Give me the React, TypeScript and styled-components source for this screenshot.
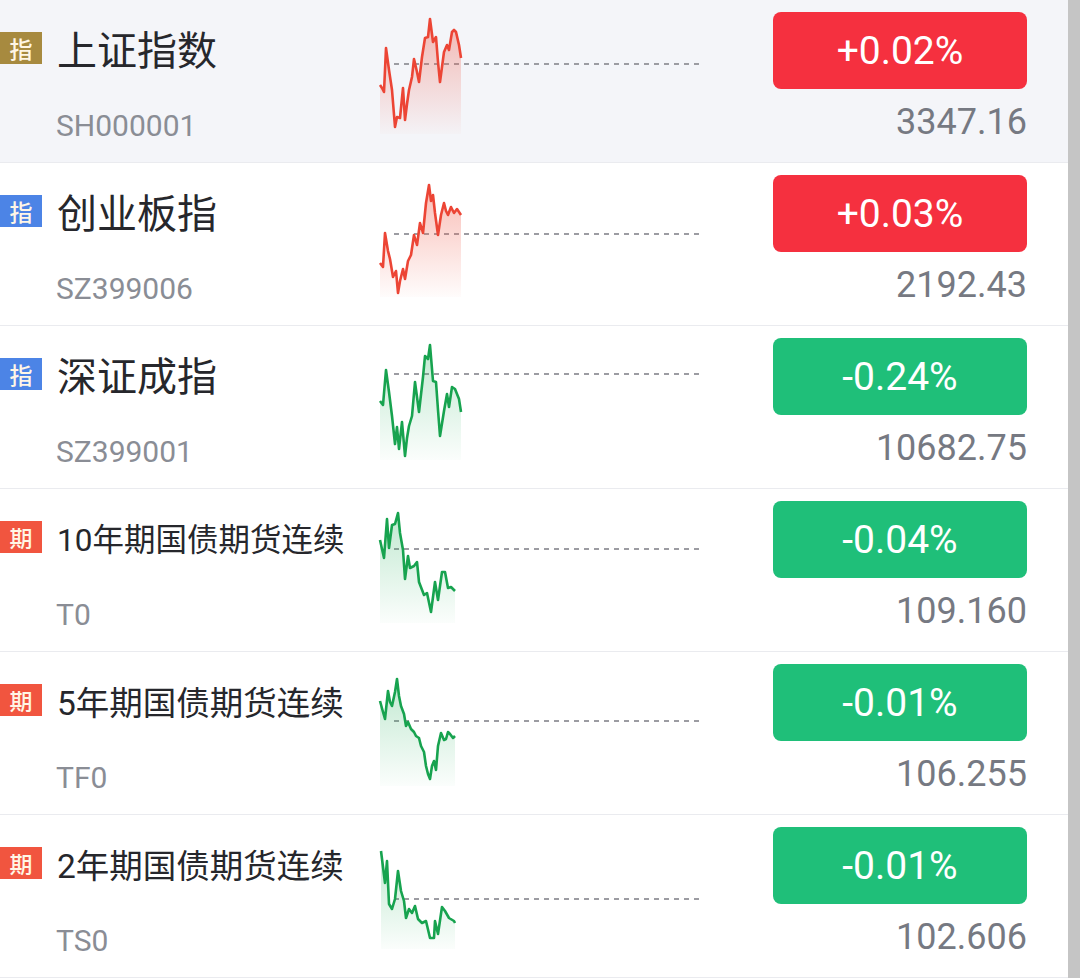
import React from "react";
import styled, { createGlobalStyle } from "styled-components";

const GlobalStyle = createGlobalStyle`
  html, body {
    margin: 0;
    padding: 0;
    background: #ffffff;
  }
  body {
    font-family: Roboto, "Noto Sans CJK SC", sans-serif;
  }
`;

const up = "#f5303f";
const down = "#1fbf79";

type Kind = "gold" | "blue" | "red";

interface Quote {
  tag: string;
  kind: Kind;
  name: string;
  nameSize: number;
  code: string;
  change: string;
  price: string;
  rising: boolean;
  base: number;
  points: [number, number][];
}

// long names shrink to fit the column
const quotes: Quote[] = [
  {
    tag: "指",
    kind: "gold",
    name: "上证指数",
    nameSize: 40,
    code: "SH000001",
    change: "+0.02%",
    price: "3347.16",
    rising: true,
    base: 64,
    points: [
      [0, 85], [2, 88], [4, 92], [6, 48], [9, 70], [12, 90], [15, 127], [17, 117], [20, 118],
      [23, 88], [25, 120], [27, 104], [29, 90], [32, 77], [34, 59], [37, 72], [39, 82], [42, 57],
      [45, 38], [48, 37], [50, 19], [53, 42], [56, 37], [58, 62], [60, 82], [64, 52],
      [67, 45], [69, 50], [72, 32], [74, 30], [76, 32], [79, 45], [81, 58],
    ],
  },
  {
    tag: "指",
    kind: "blue",
    name: "创业板指",
    nameSize: 40,
    code: "SZ399006",
    change: "+0.03%",
    price: "2192.43",
    rising: true,
    base: 71,
    points: [
      [0, 100], [3, 104], [5, 70], [8, 88], [10, 96], [13, 114], [16, 108], [18, 130], [20, 118],
      [23, 106], [25, 116], [28, 98], [31, 92], [34, 72], [37, 82], [40, 60], [43, 70], [46, 40],
      [49, 22], [51, 38], [53, 32], [55, 50], [58, 72], [61, 52], [64, 40], [66, 48], [68, 52],
      [71, 44], [74, 50], [77, 46], [81, 52],
    ],
  },
  {
    tag: "指",
    kind: "blue",
    name: "深证成指",
    nameSize: 40,
    code: "SZ399001",
    change: "-0.24%",
    price: "10682.75",
    rising: false,
    base: 48,
    points: [
      [0, 75], [3, 79], [6, 44], [9, 66], [12, 90], [15, 118], [17, 101], [19, 123],
      [22, 96], [25, 130], [27, 112], [29, 100], [32, 90], [35, 56], [39, 86], [43, 51],
      [45, 30], [48, 33], [50, 19], [53, 55], [56, 56], [58, 84], [60, 110], [64, 85],
      [67, 68], [69, 81], [72, 61], [75, 63], [79, 73], [81, 86],
    ],
  },
  {
    tag: "期",
    kind: "red",
    name: "10年期国债期货连续",
    nameSize: 31.5,
    code: "T0",
    change: "-0.04%",
    price: "109.160",
    rising: false,
    base: 60,
    points: [
      [0, 51], [4, 69], [7, 30], [9, 59], [12, 36], [15, 35], [18, 24],
      [20, 44], [23, 61], [25, 90], [28, 67], [30, 79], [34, 77], [37, 73],
      [39, 93], [44, 106], [47, 104], [51, 123], [55, 93], [58, 111],
      [62, 83], [65, 83], [68, 99], [71, 98], [75, 102],
    ],
  },
  {
    tag: "期",
    kind: "red",
    name: "5年期国债期货连续",
    nameSize: 33.5,
    code: "TF0",
    change: "-0.01%",
    price: "106.255",
    rising: false,
    base: 69,
    points: [
      [0, 49], [3, 60], [5, 67], [8, 39], [10, 50], [12, 54], [15, 40], [17, 27], [19, 44],
      [21, 54], [24, 62], [26, 74], [28, 70], [31, 77], [34, 80], [36, 84], [39, 86], [41, 94],
      [44, 100], [46, 114], [48, 122], [50, 127], [52, 114], [54, 109], [56, 118], [58, 94],
      [61, 81], [64, 88], [66, 87], [68, 80], [70, 82], [73, 86], [75, 84],
    ],
  },
  {
    tag: "期",
    kind: "red",
    name: "2年期国债期货连续",
    nameSize: 33.5,
    code: "TS0",
    change: "-0.01%",
    price: "102.606",
    rising: false,
    base: 84,
    points: [
      [1, 36], [5, 68], [7, 46], [9, 89], [12, 94], [15, 84], [18, 56],
      [21, 76], [24, 86], [26, 103], [29, 94], [32, 98], [35, 91], [38, 104],
      [42, 108], [46, 106], [50, 123], [54, 123], [55, 106], [58, 119],
      [62, 92], [65, 96], [69, 103], [74, 106], [75, 108],
    ],
  },
];

const tagColors: Record<Kind, string> = {
  gold: "#a78a3f",
  blue: "#4c84e6",
  red: "#f1553f",
};

const Page = styled.div`
  display: flex;
  width: 1080px;
  height: 978px;
  overflow: hidden;
`;

const List = styled.div`
  flex: 1;
  display: flex;
  flex-direction: column;
`;

const ScrollBar = styled.div`
  width: 12px;
  background: #c5c5c5;
`;

const Row = styled.div<{ $active?: boolean }>`
  height: 162px;
  flex-shrink: 0;
  display: flex;
  align-items: flex-start;
  padding-right: 41px;
  background: ${(p) => (p.$active ? "#f4f5f9" : "#ffffff")};
  border-bottom: 1px solid #eaebef;
`;

const Info = styled.div`
  width: 378px;
  display: flex;
  flex-direction: column;
`;

const TitleLine = styled.div`
  display: flex;
  align-items: center;
  gap: 15px;
  height: 48px;
  margin-top: 24px;
`;

const Tag = styled.span<{ $kind: Kind }>`
  width: 42px;
  height: 32px;
  display: flex;
  align-items: center;
  justify-content: center;
  background: ${(p) => tagColors[p.$kind]};
  color: #fff6e6;
  font-size: 23px;
  font-weight: 500;
  font-family: "Noto Sans CJK SC", sans-serif;
`;

const Name = styled.span<{ $size: number }>`
  font-size: ${(p) => p.$size}px;
  color: #26272c;
  white-space: nowrap;
  font-family: Roboto, "Noto Sans CJK SC", sans-serif;
`;

const Code = styled.span`
  margin-top: 36px;
  padding-left: 56px;
  font-size: 30px;
  line-height: 36px;
  color: #8a8d95;
`;

const Chart = styled.svg`
  flex-shrink: 0;
  display: block;
`;

const Side = styled.div`
  margin-left: auto;
  width: 254px;
  display: flex;
  flex-direction: column;
  align-items: flex-end;
`;

const Change = styled.div<{ $rising: boolean }>`
  margin-top: 12px;
  width: 100%;
  height: 77px;
  border-radius: 8px;
  background: ${(p) => (p.$rising ? up : down)};
  color: #ffffff;
  font-size: 39px;
  display: flex;
  align-items: center;
  justify-content: center;
`;

const Price = styled.div`
  margin-top: 11px;
  font-size: 36px;
  line-height: 44px;
  color: #767982;
`;

const Spark = ({ q, id }: { q: Quote; id: string }) => {
  const line = q.points.map(([x, y], i) => `${i ? "L" : "M"}${x + 2} ${y}`).join(" ");
  const first = q.points[0][0] + 2;
  const last = q.points[q.points.length - 1][0] + 2;
  const area = `${line} L${last} 134 L${first} 134 Z`;
  const stroke = q.rising ? "#ec4535" : "#17a34f";
  const fill = q.rising ? "#f0604f" : "#2fb463";
  return (
    <Chart width={322} height={140} viewBox="0 0 322 140">
      <defs>
        <linearGradient id={id} x1="0" y1="0" x2="0" y2="1">
          <stop offset="0%" stopColor={fill} stopOpacity={q.rising ? 0.42 : 0.3} />
          <stop offset="100%" stopColor={fill} stopOpacity={0.02} />
        </linearGradient>
      </defs>
      <line x1={16} y1={q.base} x2={322} y2={q.base} stroke="#9c9ca2" strokeWidth={2} strokeDasharray="5 5" />
      <path d={area} fill={`url(#${id})`} />
      <path d={line} fill="none" stroke={stroke} strokeWidth={2.6} strokeLinejoin="round" />
    </Chart>
  );
};

export default function App() {
  return (
    <Page>
      <GlobalStyle />
      <List>
        {quotes.map((q, i) => (
          <Row key={q.code} $active={i === 0}>
            <Info>
              <TitleLine>
                <Tag $kind={q.kind}>{q.tag}</Tag>
                <Name $size={q.nameSize}>{q.name}</Name>
              </TitleLine>
              <Code>{q.code}</Code>
            </Info>
            <Spark q={q} id={`g${i}`} />
            <Side>
              <Change $rising={q.rising}>{q.change}</Change>
              <Price>{q.price}</Price>
            </Side>
          </Row>
        ))}
      </List>
      <ScrollBar />
    </Page>
  );
}
